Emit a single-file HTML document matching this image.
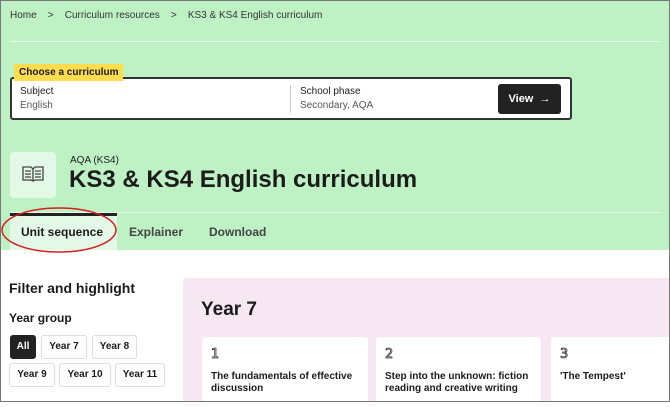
<!DOCTYPE html>
<html><head><style>
*{box-sizing:border-box;margin:0;padding:0}
body{width:670px;height:402px;overflow:hidden;font-family:"Liberation Sans",sans-serif;color:#1b1b1b;background:#fff;position:relative}
.frame{position:absolute;inset:0;border:1px solid #777;z-index:10;pointer-events:none}
.green{position:absolute;left:0;top:0;width:670px;height:250px;background:#bef2c5}
.a{position:absolute;white-space:nowrap}
.hr{position:absolute;height:1px;background:#eafaec}
.box{position:absolute;left:10px;top:77px;width:562px;height:43px;background:#fff;border:2px solid #333;border-radius:3px}
.tag{position:absolute;left:14px;top:64px;background:#fddc4e;font-size:10px;font-weight:bold;padding:3px 5px;}
.btn{position:absolute;left:498px;top:84px;width:63px;height:30px;background:#222;color:#fff;border-radius:3px;font-size:11px;font-weight:bold;text-align:center;line-height:30px}
.chip{position:absolute;height:24px;border:1px solid #ddd;border-radius:3px;font-size:10px;font-weight:bold;line-height:22px;text-align:center;background:#fff}
.card{position:absolute;top:337px;height:70px;background:#fff;border-radius:3px}
.card .n{font-size:13px;font-family:"DejaVu Sans",sans-serif;color:#fff;-webkit-text-stroke:0.8px #333;position:absolute;left:9px;top:10px}
.card .t{font-size:10px;font-weight:bold;position:absolute;left:9px;top:33px;line-height:12px}
</style></head><body>
<div class="green"></div>
<div class="a" style="left:10px;top:10px;font-size:10px;color:#333">Home &nbsp;&nbsp; &gt; &nbsp;&nbsp; Curriculum resources &nbsp;&nbsp; &gt; &nbsp;&nbsp; KS3 &amp; KS4 English curriculum</div>
<div class="hr" style="left:10px;top:41px;width:650px"></div>
<div class="box"></div>
<div class="tag">Choose a curriculum</div>
<div class="a" style="left:20px;top:86px;font-size:10px;color:#222">Subject</div>
<div class="a" style="left:20px;top:100px;font-size:10px;color:#555">English</div>
<div style="position:absolute;left:290px;top:85px;width:1px;height:28px;background:#ccc"></div>
<div class="a" style="left:300px;top:86px;font-size:10px;color:#222">School phase</div>
<div class="a" style="left:300px;top:100px;font-size:10px;color:#555">Secondary, AQA</div>
<div class="btn">View &nbsp;→</div>
<div style="position:absolute;left:10px;top:152px;width:46px;height:46px;background:#e4f8e7;border-radius:4px"></div>
<svg class="a" style="left:21px;top:164px" width="24" height="20" viewBox="0 0 24 20"><g fill="none" stroke="#444" stroke-width="1.3"><path d="M2 3h8l2 2 2-2h8v13h-8l-2 1-2-1H2z"/><path d="M12 5v12M4 7h6M4 10h6M4 13h6M14 7h6M14 10h6M14 13h6"/></g></svg>
<div class="a" style="left:70px;top:155px;font-size:10px">AQA (KS4)</div>
<div class="a" style="left:69px;top:166px;font-size:24px;font-weight:bold">KS3 &amp; KS4 English curriculum</div>
<div class="hr" style="left:10px;top:212px;width:650px"></div>
<div style="position:absolute;left:10px;top:213px;width:107px;height:37px;background:#e3f8e6;border-top:3px solid #222"></div>
<div class="a" style="left:21px;top:225px;font-size:12px;font-weight:bold">Unit sequence</div>
<div class="a" style="left:129px;top:225px;font-size:12px;font-weight:bold;color:#444">Explainer</div>
<div class="a" style="left:209px;top:225px;font-size:12px;font-weight:bold;color:#444">Download</div>
<svg class="a" style="left:0;top:204px" width="120" height="50"><ellipse cx="59" cy="26" rx="57" ry="22" fill="none" stroke="#d42020" stroke-width="1.5"/></svg>
<div class="a" style="left:9px;top:280px;font-size:14px;font-weight:bold">Filter and highlight</div>
<div class="a" style="left:9px;top:311px;font-size:12px;font-weight:bold">Year group</div>
<div class="chip" style="left:10px;top:335px;width:26px;background:#222;color:#fff;border-color:#222">All</div>
<div class="chip" style="left:41px;top:335px;width:46px">Year 7</div>
<div class="chip" style="left:92px;top:335px;width:45px">Year 8</div>
<div class="chip" style="left:9px;top:363px;width:46px">Year 9</div>
<div class="chip" style="left:59px;top:363px;width:52px">Year 10</div>
<div class="chip" style="left:115px;top:363px;width:50px">Year 11</div>
<div style="position:absolute;left:183px;top:278px;width:487px;height:124px;background:#f6e7f2;border-radius:3px 0 0 0"></div>
<div class="a" style="left:201px;top:299px;font-size:19px;font-weight:bold">Year 7</div>
<div class="card" style="left:202px;width:166px"><div class="n">1</div><div class="t" style="top:34px">The fundamentals of effective<br>discussion</div></div>
<div class="card" style="left:376px;width:165px"><div class="n">2</div><div class="t" style="top:34px">Step into the unknown: fiction<br>reading and creative writing</div></div>
<div class="card" style="left:551px;width:130px"><div class="n">3</div><div class="t" style="top:34px">'The Tempest'</div></div>
<div class="frame"></div>
</body></html>
